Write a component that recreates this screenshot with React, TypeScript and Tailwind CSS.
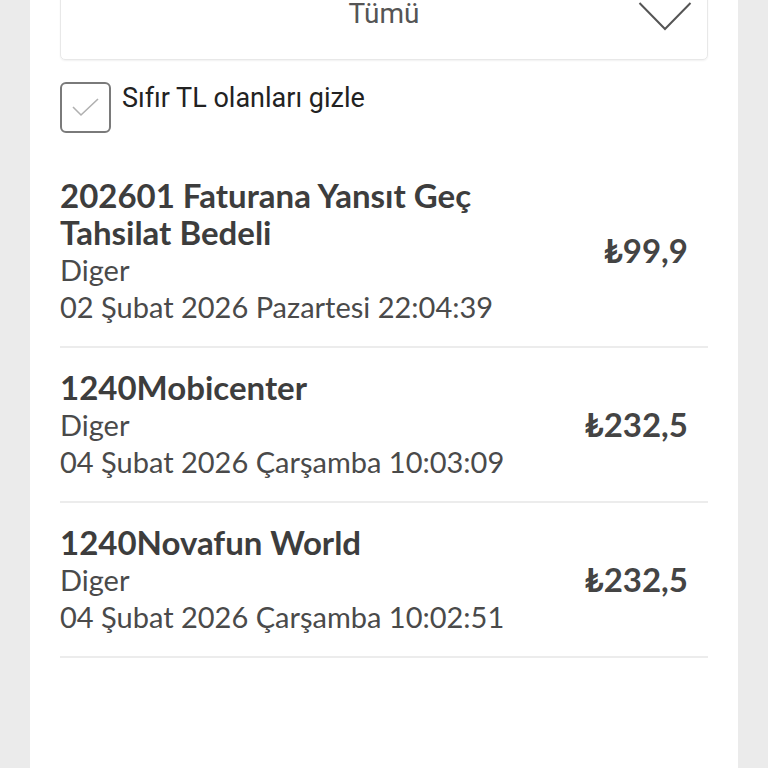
import React from "react";

const items = [
  { title: ["202601 Faturana Yansıt Geç", "Tahsilat Bedeli"], cat: "Diger", date: "02 Şubat 2026 Pazartesi 22:04:39", amount: "₺99,9" },
  { title: ["1240Mobicenter"], cat: "Diger", date: "04 Şubat 2026 Çarşamba 10:03:09", amount: "₺232,5" },
  { title: ["1240Novafun World"], cat: "Diger", date: "04 Şubat 2026 Çarşamba 10:02:51", amount: "₺232,5" },
];

export default function App() {
  return (
    <div className="min-h-screen w-full bg-[#ebebeb] flex justify-center overflow-hidden">
      <div className="w-[708px] min-h-[768px] bg-white px-[30px]">
        <div className="mt-[-32px] h-[92px] rounded-[5px] border border-[#e8e8e8] shadow-[0_1px_2px_rgba(0,0,0,0.06)] relative flex items-center justify-center">
          <span className="text-[28px] text-[#555] leading-none" style={{ fontFamily: "Roboto, sans-serif" }}>Tümü</span>
          <svg className="absolute right-[15px] top-[32px]" width="54" height="30" viewBox="0 0 54 30" fill="none">
            <path d="M1.5 2 L27 28 L52.5 2" stroke="#555" strokeWidth="2" strokeLinejoin="miter" />
          </svg>
        </div>
        <div className="mt-[22px] flex items-start gap-[11px]">
          <div className="w-[51px] h-[51px] shrink-0 rounded-[6px] border-2 border-[#7a7a7a] flex items-center justify-center">
            <svg width="30" height="20" viewBox="0 0 30 20" fill="none">
              <path d="M2 9 L10 17 L27 1" stroke="#b0b0b0" strokeWidth="1.6" />
            </svg>
          </div>
          <span className="text-[27px] leading-[32px] text-[#222]" style={{ fontFamily: "Roboto, sans-serif" }}>Sıfır TL olanları gizle</span>
        </div>
        <div className="mt-[23px]">
          {items.map((it, i) => (
            <div key={i} className="flex items-center justify-between border-b-2 border-[#ececec] py-[21px] pr-[20px]" style={{ fontFamily: "Lato, sans-serif" }}>
              <div className="flex flex-col">
                {it.title.map((t, j) => (
                  <div key={j} className="text-[33px] leading-[37px] font-bold text-[#3d3d3d]">{t}</div>
                ))}
                <div className="text-[29px] leading-[37px] text-[#4a4a4a]">{it.cat}</div>
                <div className="text-[29px] leading-[37px] text-[#4a4a4a]">{it.date}</div>
              </div>
              <div className="text-[33px] font-bold text-[#444]">{it.amount}</div>
            </div>
          ))}
        </div>
      </div>
    </div>
  );
}
